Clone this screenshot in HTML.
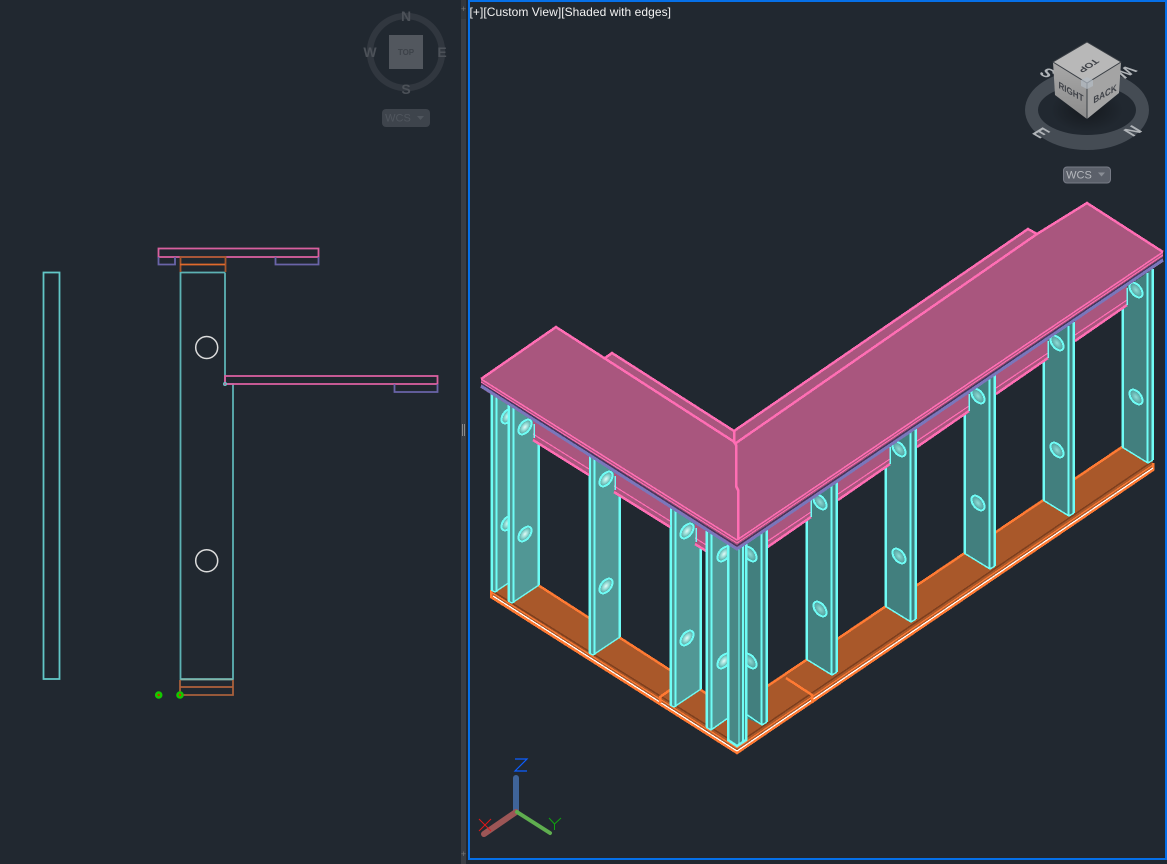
<!DOCTYPE html>
<html><head><meta charset="utf-8"><title>Viewports</title>
<style>
html,body{margin:0;padding:0;background:#212830;width:1167px;height:864px;overflow:hidden}
svg{display:block;position:absolute;left:0;top:0}
text{font-family:"Liberation Sans",sans-serif}
</style></head><body>
<svg width="1167" height="864" viewBox="0 0 1167 864" xmlns="http://www.w3.org/2000/svg">
<defs>
<radialGradient id="hl"><stop offset="0" stop-color="#e4fbf8"/><stop offset=".5" stop-color="#8fd8d2"/><stop offset="1" stop-color="#4f9c98"/></radialGradient>
<radialGradient id="hr"><stop offset="0" stop-color="#8fdcd6"/><stop offset="1" stop-color="#4d9a98"/></radialGradient>
<radialGradient id="sh"><stop offset="0" stop-color="#15191e"/><stop offset="1" stop-color="#15191e" stop-opacity="0"/></radialGradient>
<linearGradient id="cr" x1="0" y1="0" x2="0" y2="1"><stop offset="0" stop-color="#a8a8a8"/><stop offset="1" stop-color="#8c8c8c"/></linearGradient>

<g id="rc">
<polygon points="1122,290 1153,269 1153,460 1148,463 1122,447" fill="#427f7e"/>
<line x1="1152.500" y1="269" x2="1152.500" y2="460" stroke="#6ffcf5" stroke-width="2.500"/>
<line x1="1122.500" y1="300" x2="1122.500" y2="447" stroke="#6ffcf5" stroke-width="2.500"/>
<polyline points="1153,460 1148,463 1122,447" fill="none" stroke="#6ffcf5" stroke-width="1.500"/>
<line x1="1147.500" y1="273" x2="1147.500" y2="463" stroke="#6ffcf5" stroke-width="2"/>
<ellipse cx="1136" cy="290" rx="8.500" ry="5" transform="rotate(52 1136 290)" fill="url(#hr)" stroke="#6ffcf5" stroke-width="2"/>
<ellipse cx="1136" cy="397" rx="8.500" ry="5" transform="rotate(52 1136 397)" fill="url(#hr)" stroke="#6ffcf5" stroke-width="2"/>
</g>

<g id="rb">
<polygon points="1075,321 1127,286 1127,305 1075,341" fill="#a9567e"/>
<line x1="1127" y1="300" x2="1075" y2="335" stroke="#ff6eb4" stroke-width="1.200"/>
<line x1="1127" y1="305" x2="1075" y2="341" stroke="#ff6eb4" stroke-width="2.500"/>
<line x1="1127" y1="288" x2="1127" y2="305" stroke="#6ffcf5" stroke-width="1.500"/>
</g>

<g id="lc">
<polygon points="589,455 620,474 620,637 593,655 589,653" fill="#519795"/>
<line x1="589.500" y1="455" x2="589.500" y2="653" stroke="#6ffcf5" stroke-width="2.500"/>
<line x1="619.500" y1="474" x2="619.500" y2="637" stroke="#6ffcf5" stroke-width="2.500"/>
<polyline points="589,653 593,655 620,637" fill="none" stroke="#6ffcf5" stroke-width="1.500"/>
<line x1="594.500" y1="458" x2="594.500" y2="655" stroke="#6ffcf5" stroke-width="2"/>
<ellipse cx="606" cy="479" rx="8.500" ry="5" transform="rotate(-52 606 479)" fill="url(#hl)" stroke="#6ffcf5" stroke-width="2"/>
<ellipse cx="606" cy="586" rx="8.500" ry="5" transform="rotate(-52 606 586)" fill="url(#hl)" stroke="#6ffcf5" stroke-width="2"/>
</g>

<g id="lb">
<polygon points="533,420 589,455 589,475 533,440" fill="#a9567e"/>
<line x1="533" y1="434" x2="589" y2="469" stroke="#ff6eb4" stroke-width="1.200"/>
<line x1="533" y1="440" x2="589" y2="475" stroke="#ff6eb4" stroke-width="2.500"/>
<line x1="534" y1="424" x2="534" y2="438" stroke="#6ffcf5" stroke-width="1.500"/>
</g>
</defs>

<rect width="1167" height="864" fill="#212830"/>

<!-- 2D left viewport -->
<g fill="none" stroke-width="1.800">
<rect x="43.500" y="272.500" width="16" height="406.500" stroke="#62c6c6"/>
<polyline points="225,272.500 180.500,272.500 180.500,679 233,679 233,384 225,384 225,272.500" stroke="#5db2b4"/>
<line x1="180.500" y1="679.500" x2="233" y2="679.500" stroke="#84b5a8"/>
<rect x="158.500" y="248.500" width="160" height="8.500" stroke="#d9609f"/>
<polyline points="158.500,257 158.500,264.500 175,264.500 175,257" stroke="#6a64a8"/>
<polyline points="275.500,257 275.500,264.500 318.500,264.500 318.500,257" stroke="#6a64a8"/>
<polyline points="180.500,272 180.500,257 225.500,257 225.500,272" stroke="#a8562c"/>
<line x1="180" y1="264.500" x2="225" y2="264.500" stroke="#e06a2c"/>
<rect x="225" y="376" width="212.500" height="8" stroke="#d9609f"/>
<polyline points="394.500,384 394.500,392 437.500,392 437.500,384" stroke="#6a64a8"/>
<polyline points="180,680 180,695 233,695 233,680" stroke="#a8603c"/>
<line x1="180" y1="687" x2="233" y2="687" stroke="#b0623c"/>
<circle cx="206.700" cy="347.500" r="11" stroke="#dcdcdc" stroke-width="1.500"/>
<circle cx="206.700" cy="560.700" r="11" stroke="#dcdcdc" stroke-width="1.500"/>
<circle cx="225" cy="384" r="1.500" stroke="#62c6c6" stroke-width="1"/>
</g>
<circle cx="158.700" cy="695" r="3.800" fill="#14c800"/><circle cx="158.700" cy="695" r="1.200" fill="#c03000"/>
<circle cx="180" cy="695" r="3.800" fill="#14c800"/><circle cx="180" cy="695" r="1.200" fill="#d03000"/>

<!-- left ViewCube -->
<circle cx="406" cy="52" r="36" fill="none" stroke="#31373f" stroke-width="6.500"/>
<rect x="389" y="35" width="34" height="34" fill="#52575e"/>
<text x="406" y="55" font-size="8" font-weight="bold" fill="#3d4249" text-anchor="middle">TOP</text>
<g font-size="14" font-weight="bold" fill="#4c5158" text-anchor="middle">
<text x="406" y="21">N</text><text x="370" y="57">W</text><text x="442" y="57">E</text><text x="406" y="94">S</text>
</g>
<rect x="382" y="109" width="48" height="18" rx="4" fill="#3e444c"/>
<text x="398" y="121.500" font-size="11" fill="#50565e" text-anchor="middle">WCS</text>
<polygon points="417,116 424,116 420.500,120" fill="#50565e"/>

<!-- separator -->
<rect x="461" y="0" width="5" height="864" fill="#3a3e44"/>
<rect x="461" y="0" width="5" height="19" fill="#33373c"/>
<text x="463.500" y="12" font-size="9" fill="#777" text-anchor="middle">+</text>
<text x="463.500" y="857" font-size="9" fill="#777" text-anchor="middle">+</text>
<rect x="462" y="424" width="1" height="12" fill="#8a8a8a"/><rect x="464" y="424" width="1" height="12" fill="#8a8a8a"/>

<!-- blue border of right viewport -->
<rect x="469" y="1" width="697" height="858" fill="none" stroke="#0670e8" stroke-width="2"/>

<text x="469.500" y="16" font-size="12" fill="#f2f2f2" textLength="201.500" lengthAdjust="spacing">[+][Custom View][Shaded with edges]</text>

<!-- 3D model -->
<g shape-rendering="crispEdges">
<!-- base plate -->
<polygon points="491,590 516,571 732,710 1122,447 1153,463 1153,470 737,753 491,597" fill="#a9582a"/>
<polyline points="538,585 732,710 1122,447" fill="none" stroke="#ff7a33" stroke-width="2.500"/>
<polyline points="491,592 737,748 1153,465" fill="none" stroke="#ff7a33" stroke-width="1.200"/>
<polyline points="491,590 737,744 1153,461" fill="none" stroke="#7e3f1e" stroke-width="1.500"/>
<polyline points="491,590 491,597 737,753 1153,470 1153,463" fill="none" stroke="#ff7a33" stroke-width="2.500"/>
<polyline points="493,596 737,751 1153,468" fill="none" stroke="#ffffff" stroke-width="1.200"/>
<polyline points="670,690 660,697 660,703" fill="none" stroke="#ff7a33" stroke-width="2.500"/>
<polyline points="786,678 812,695 812,703" fill="none" stroke="#ff7a33" stroke-width="2.500"/>

<!-- columns -->
<use href="#lc" x="-98" y="-63"/>
<use href="#lc" x="-81" y="-52"/>
<use href="#lc"/>
<use href="#lc" x="81" y="52"/>

<use href="#rc"/>
<use href="#rc" x="-79" y="53"/>
<use href="#rc" x="-158" y="106"/>
<use href="#rc" x="-237" y="159"/>
<use href="#rc" x="-316" y="212"/>

<!-- beams -->
<use href="#rb"/>
<use href="#rb" x="-79" y="53"/>
<use href="#rb" x="-158" y="106"/>
<use href="#rb" x="-237" y="159"/>
<use href="#rb" x="-316" y="212"/>
<use href="#lb"/>
<use href="#lb" x="81" y="52"/>
<use href="#lb" x="162" y="104"/>

<!-- corner columns -->
<polygon points="746,542 767,528 767,722 762,725 746,718" fill="#427f7e"/>
<line x1="766.500" y1="528" x2="766.500" y2="722" stroke="#6ffcf5" stroke-width="2.500"/>
<polyline points="767,722 762,725 746,714" fill="none" stroke="#6ffcf5" stroke-width="1.500"/>
<line x1="761.500" y1="532" x2="761.500" y2="725" stroke="#6ffcf5" stroke-width="2"/>
<ellipse cx="750" cy="554" rx="8.500" ry="5" transform="rotate(52 750 554)" fill="url(#hr)" stroke="#6ffcf5" stroke-width="2"/>
<ellipse cx="750" cy="661" rx="8.500" ry="5" transform="rotate(52 750 661)" fill="url(#hr)" stroke="#6ffcf5" stroke-width="2"/>

<polygon points="706,529 728,542 728,718 711,730 706,727" fill="#519795"/>
<line x1="706.500" y1="529" x2="706.500" y2="727" stroke="#6ffcf5" stroke-width="2.500"/>
<polyline points="706,727 711,730 728,718" fill="none" stroke="#6ffcf5" stroke-width="1.500"/>
<line x1="711.500" y1="532" x2="711.500" y2="730" stroke="#6ffcf5" stroke-width="2"/>
<ellipse cx="724" cy="554" rx="8.500" ry="5" transform="rotate(-52 724 554)" fill="url(#hl)" stroke="#6ffcf5" stroke-width="2"/>
<ellipse cx="724" cy="661" rx="8.500" ry="5" transform="rotate(-52 724 661)" fill="url(#hl)" stroke="#6ffcf5" stroke-width="2"/>

<polygon points="728,542 737,548 746,542 746,740 737,746 728,740" fill="#488886"/>
<polyline points="728,540 728,740 737,746 746,740 746,540" fill="none" stroke="#6ffcf5" stroke-width="2.500"/>
<line x1="739" y1="548" x2="739" y2="745" stroke="#6ffcf5" stroke-width="1"/>
<line x1="743" y1="545" x2="743" y2="742" stroke="#6ffcf5" stroke-width="2"/>

<!-- top plate -->
<polygon points="481,379 481,388 737,550 1163,262 1163,252 737,540" fill="#a9567e"/>
<polyline points="481,382 737,543 1163,255" fill="none" stroke="#ff6eb4" stroke-width="1"/>
<polyline points="481,383.500 737,546 1163,257.500" fill="none" stroke="#47355c" stroke-width="1.500"/>
<polyline points="481,386 737,549 1163,260" fill="none" stroke="#7a76bb" stroke-width="3"/>
<polygon points="481,379 556,327 605,358 612,353 734,431 1028,229 1037,234 1087,203 1163,252 737,540" fill="#a9567e"/>
<polyline points="605,358 612,353 734,431 1028,229 1037,234" fill="none" stroke="#ff6eb4" stroke-width="2.500"/>
<polyline points="481,379 556,327 736,443 1037,234 1087,203 1163,252" fill="none" stroke="#ff6eb4" stroke-width="2.500"/>
<polyline points="481,379 737,540 1163,252" fill="none" stroke="#ff6eb4" stroke-width="1.500"/>
<polyline points="734,431 734,442 736,445 736,486 738,490 738,540" fill="none" stroke="#ff6eb4" stroke-width="2.500"/>
</g>

<!-- UCS icon -->
<g stroke-linecap="round">
<line x1="516" y1="778" x2="516" y2="811" stroke="#3f6499" stroke-width="6"/>
<line x1="516" y1="812" x2="484" y2="834" stroke="#9c5656" stroke-width="6"/>
<line x1="517" y1="812" x2="550" y2="833" stroke="#5fae4f" stroke-width="4"/>
</g>
<polyline points="515,759 527,759 515,771 527,771" fill="none" stroke="#0c5eff" stroke-width="1.200"/>
<path d="M479 819L491 831M491 819L479 831" stroke="#e01818" stroke-width="1" fill="none"/>
<path d="M549 818L554.500 824L561 818M554.500 824V830" stroke="#10a010" stroke-width="1" fill="none"/>

<!-- right ViewCube -->
<path fill-rule="evenodd" d="M1025 110a62 40 0 1 0 124 0a62 40 0 1 0 -124 0ZM1038 110a49 25 0 1 1 98 0a49 25 0 1 1 -98 0Z" fill="#454c54"/>
<ellipse cx="1087" cy="110" rx="36" ry="22" fill="url(#sh)"/>
<g font-weight="bold" fill="#b0b4b8" font-size="17" text-anchor="middle">
<text transform="matrix(-.8 -.5 .9 -.5 1053 70)">S</text>
<text transform="matrix(-.8 .5 -.9 -.5 1121 69)">W</text>
<text transform="matrix(.85 .5 -.9 .55 1036 136)">E</text>
<text transform="matrix(.85 -.5 .9 .55 1138 134)">N</text>
</g>
<polygon points="1087,42 1121,62 1087,83 1053,62" fill="#b8b8b8"/>
<polygon points="1053,62 1087,83 1087,119 1055,95" fill="url(#cr)"/>
<polygon points="1121,62 1087,83 1087,119 1119,93" fill="#a4a4a4"/>
<path d="M1087 42L1121 62L1087 83L1053 62ZM1087 83V119" fill="none" stroke="#3a3f45" stroke-width="1"/>
<polygon points="1087,77 1093,80 1093,86 1087,89 1081,86 1081,80" fill="#b4bcc4" opacity=".7"/>
<g font-weight="bold" font-size="10" fill="#3f4248" text-anchor="middle">
<text transform="matrix(-.85 .55 -.75 -.5 1086 64)">TOP</text>
<text font-size="9.500" transform="matrix(.85 .48 0 1 1071 95)">RIGHT</text>
<text font-size="9.500" transform="matrix(.85 -.48 0 1 1105 97)">BACK</text>
</g>
<rect x="1063.500" y="167" width="47" height="16" rx="3.500" fill="#5b606a" stroke="#777b86" stroke-width="1"/>
<text x="1079" y="178.500" font-size="11" fill="#b5b8bd" text-anchor="middle">WCS</text>
<polygon points="1098,172.500 1105,172.500 1101.500,176.500" fill="#8a8e96"/>
</svg>
</body></html>
